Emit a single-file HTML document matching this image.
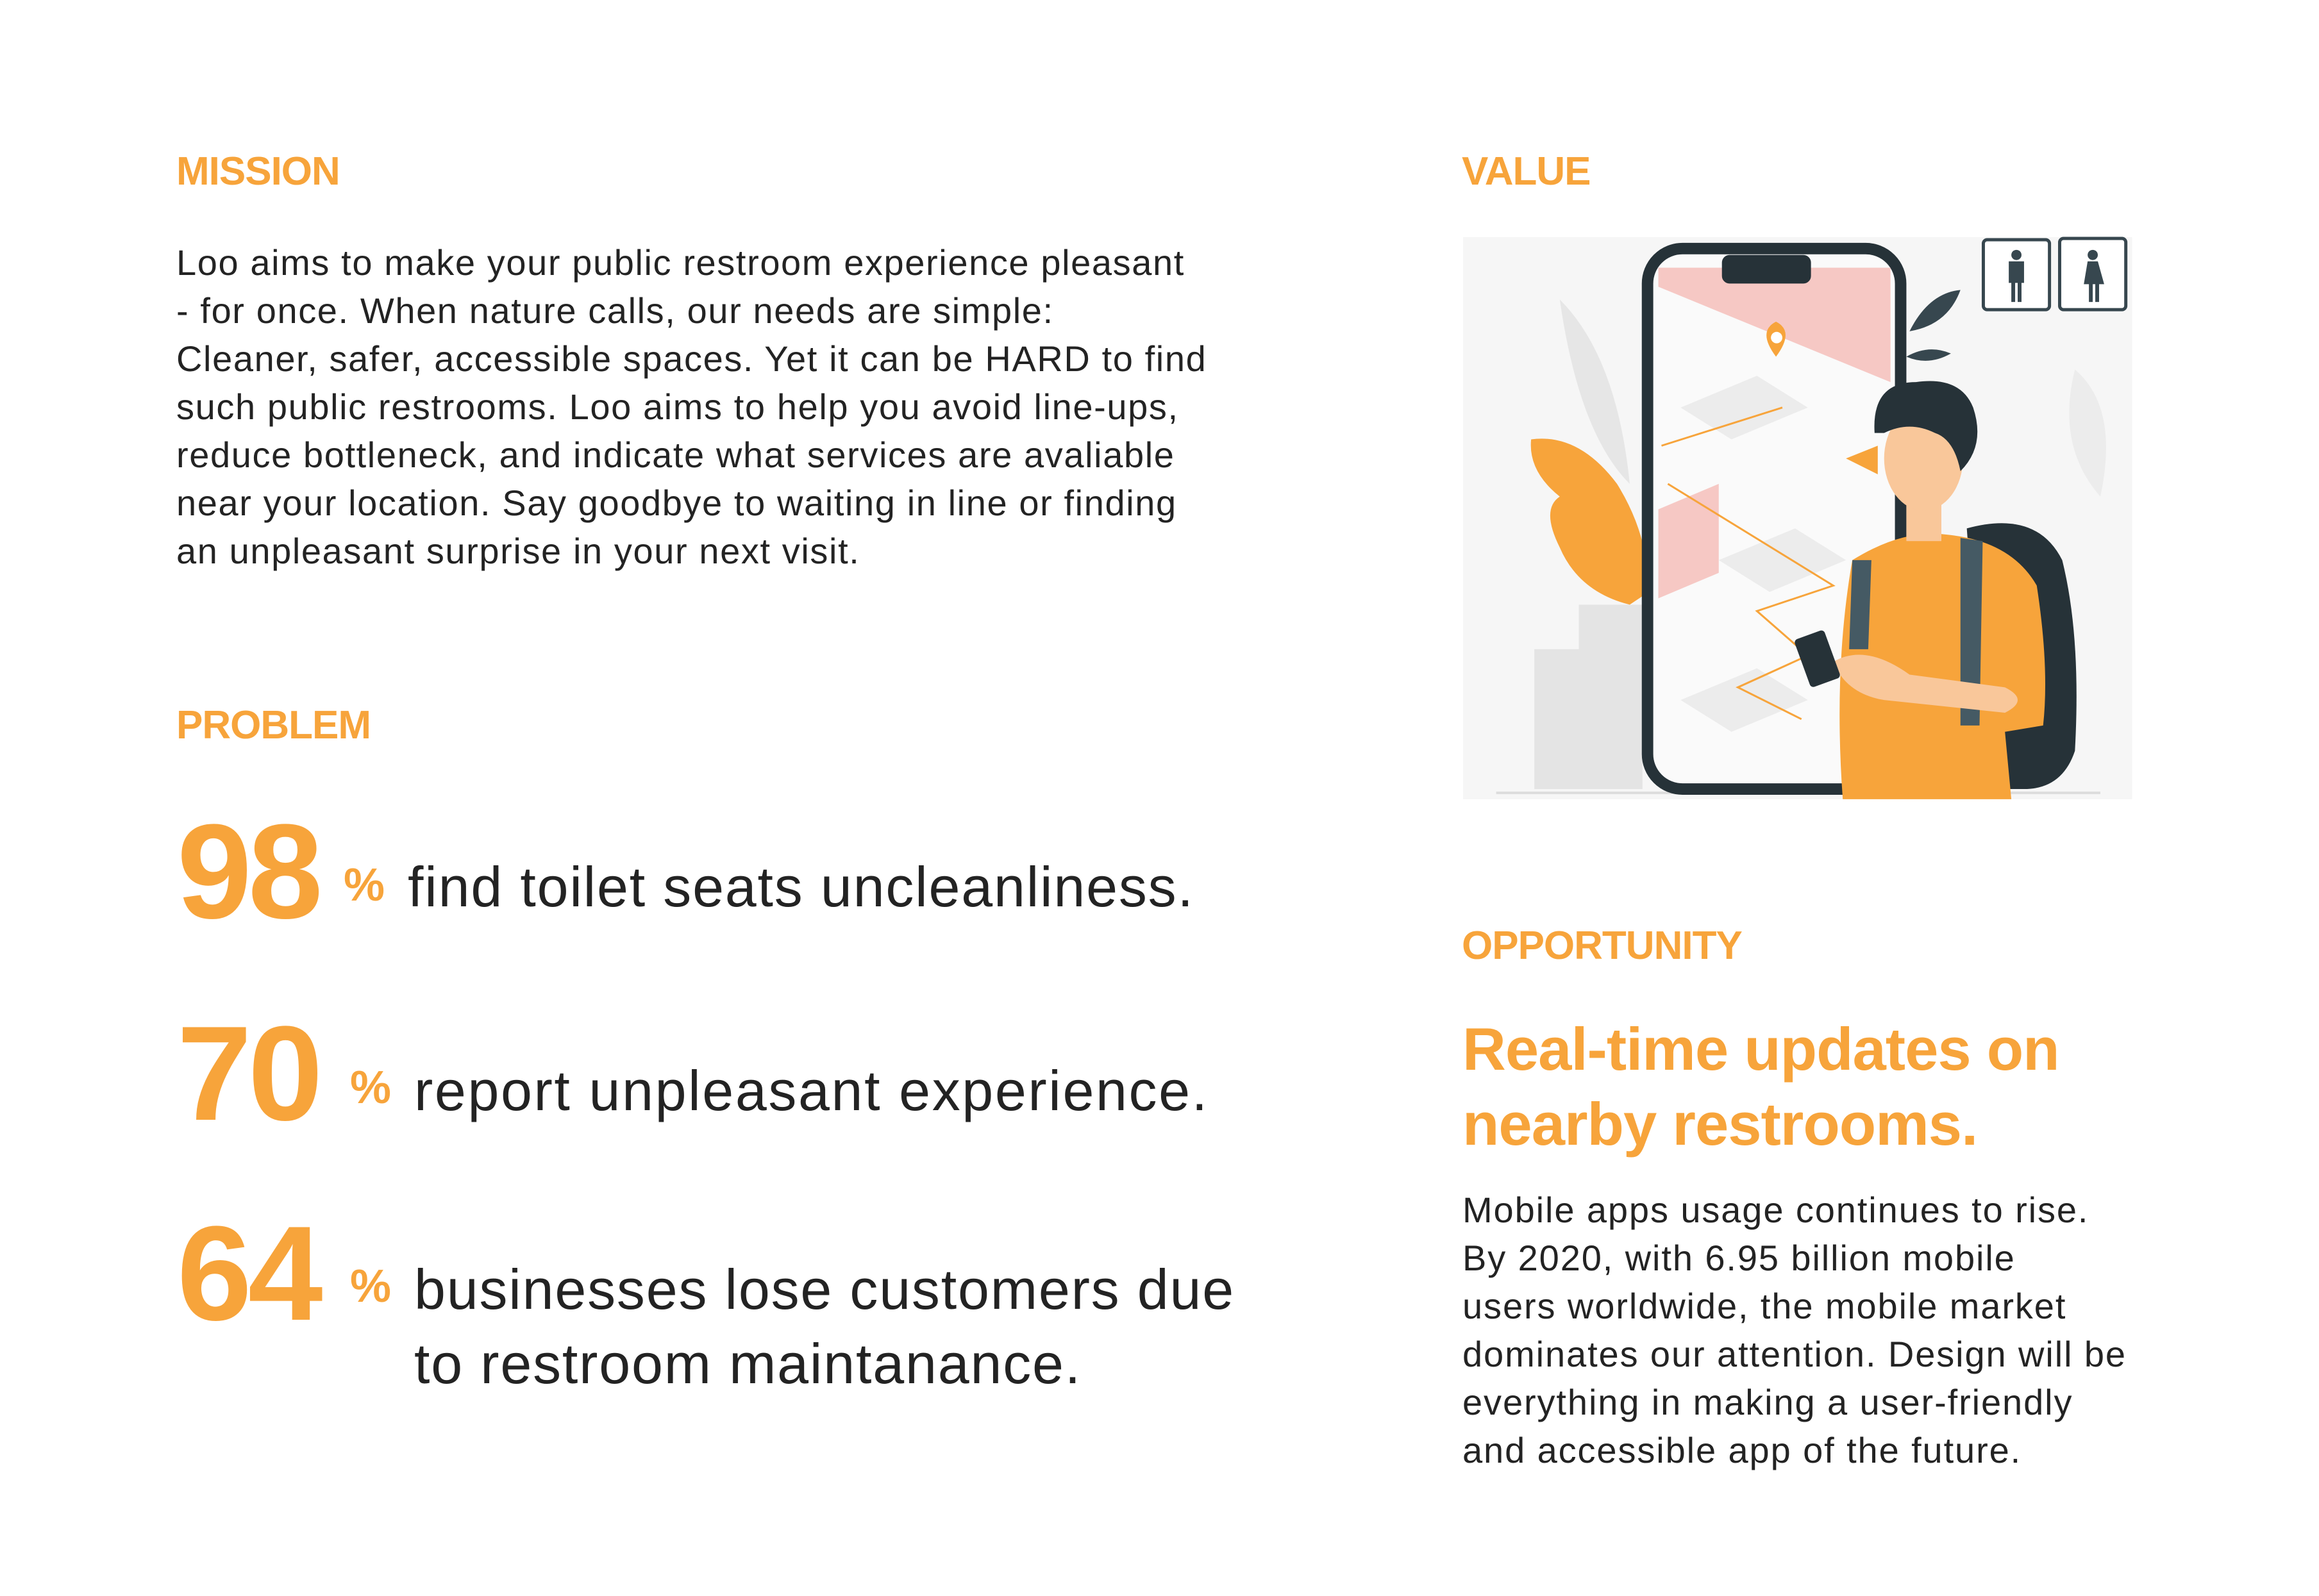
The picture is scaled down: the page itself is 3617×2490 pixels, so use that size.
<!DOCTYPE html>
<html><head><meta charset="utf-8"><style>
html,body{margin:0;padding:0;background:#fff;}
body{width:3617px;height:2490px;position:relative;overflow:hidden;font-family:"Liberation Sans",sans-serif;color:#232323;}
.h{position:absolute;color:#F7A43B;font-weight:bold;font-size:62px;letter-spacing:-1px;white-space:nowrap;}
.p{position:absolute;font-size:56px;line-height:75px;white-space:nowrap;letter-spacing:1.6px;}
.num{position:absolute;color:#F7A43B;font-weight:bold;font-size:210px;line-height:1;letter-spacing:-6px;}
.pc{position:absolute;color:#F7A43B;font-weight:bold;font-size:72px;}
.st{position:absolute;font-size:88px;line-height:116px;white-space:nowrap;letter-spacing:1.8px;}
</style></head><body>
<div class="h" style="left:275px;top:232px;">MISSION</div>
<div class="p" style="left:275px;top:372px;">Loo aims to make your public restroom experience pleasant<br>- for once. When nature calls, our needs are simple:<br>Cleaner, safer, accessible spaces. Yet it can be HARD to find<br>such public restrooms. Loo aims to help you avoid line-ups,<br>reduce bottleneck, and indicate what services are avaliable<br>near your location. Say goodbye to waiting in line or finding<br>an unpleasant surprise in your next visit.</div>

<div class="h" style="left:275px;top:1096px;">PROBLEM</div>

<div class="num" style="left:276px;top:1255px;">98</div>
<div class="pc" style="left:536px;top:1340px;">%</div>
<div class="st" style="left:636px;top:1326px;">find toilet seats uncleanliness.</div>

<div class="num" style="left:276px;top:1570px;">70</div>
<div class="pc" style="left:546px;top:1656px;">%</div>
<div class="st" style="left:646px;top:1644px;letter-spacing:2.6px;">report unpleasant experience.</div>

<div class="num" style="left:276px;top:1882px;">64</div>
<div class="pc" style="left:546px;top:1966px;">%</div>
<div class="st" style="left:646px;top:1954px;">businesses lose customers due<br>to restroom maintanance.</div>

<div class="h" style="left:2280px;top:232px;">VALUE</div>

<svg style="position:absolute;left:0;top:0" width="3617" height="2490" viewBox="0 0 3617 2490">
<g transform="translate(2282,370) scale(0.992) translate(-2298,-372)">
 <rect x="2298" y="372" width="1052" height="884" fill="#f6f6f6"/>
 <path d="M2450 470 Q2540 560 2560 760 Q2480 680 2450 470Z" fill="#e6e6e6"/>
 <rect x="2410" y="1020" width="170" height="220" fill="#e4e4e4"/>
 <rect x="2480" y="950" width="100" height="90" fill="#e4e4e4"/>
 <path d="M3260 580 Q3330 640 3300 780 Q3230 700 3260 580Z" fill="#ececec"/>
 <line x1="2350" y1="1246" x2="3300" y2="1246" stroke="#ddd" stroke-width="4"/>
 <path d="M2405 690 Q2480 680 2540 760 Q2590 840 2590 930 L2560 950 Q2480 930 2450 860 Q2420 800 2450 780 Q2400 740 2405 690Z" fill="#F7A43B"/>
 <rect x="2588" y="390" width="398" height="850" rx="55" fill="#fafafa" stroke="#263238" stroke-width="18"/>
 <path d="M2605 420 L2970 420 L2970 600 L2605 450Z" fill="#f6c8c4"/>
 <path d="M2605 800 L2700 760 L2700 900 L2605 940Z" fill="#f6c8c4"/>
 <g fill="#ececec"><path d="M2640 640 L2760 590 L2840 640 L2720 690Z"/><path d="M2700 880 L2820 830 L2900 880 L2780 930Z"/><path d="M2640 1100 L2760 1050 L2840 1100 L2720 1150Z"/></g>
 <rect x="2705" y="400" width="140" height="45" rx="12" fill="#263238"/>
 <path d="M2610 700 L2800 640 M2620 760 L2880 920 L2760 960 L2840 1030 L2730 1080 L2830 1130" stroke="#F7A43B" stroke-width="3" fill="none"/>
 <path d="M2790 560 Q2760 520 2790 505 Q2820 520 2790 560Z" fill="#F7A43B"/>
 <circle cx="2791" cy="530" r="9" fill="#fff"/>
 <path d="M3000 520 Q3030 460 3080 455 Q3060 510 3000 520Z" fill="#37474f"/>
 <path d="M2995 560 Q3030 540 3065 555 Q3030 575 2995 560Z" fill="#37474f"/>
 <path d="M3090 830 Q3200 800 3240 880 Q3270 1000 3260 1180 Q3240 1240 3180 1240 L3120 1240Z" fill="#263238"/>
 <path d="M2910 880 Q2990 830 3060 840 Q3160 850 3200 920 Q3220 1050 3210 1140 L3150 1150 L3160 1256 L2895 1256 Q2880 1050 2910 880Z" fill="#F7A43B"/>
 <path d="M2910 880 L2940 880 L2935 1020 L2905 1020Z" fill="#455a64"/>
 <path d="M3080 845 L3115 850 L3110 1140 L3080 1140Z" fill="#455a64"/>
 <path d="M2880 1040 Q2930 1010 3000 1060 L3150 1080 Q3190 1100 3150 1120 L2960 1100 Q2900 1090 2880 1040Z" fill="#f9c79a"/>
 <rect x="2830" y="995" width="50" height="80" rx="6" fill="#263238" transform="rotate(-20 2855 1035)"/>
 <rect x="2995" y="780" width="55" height="70" fill="#f9c79a"/>
 <ellipse cx="3022" cy="720" rx="62" ry="82" fill="#f9c79a"/>
 <path d="M2945 680 Q2940 600 3010 600 Q3080 590 3100 640 Q3120 700 3080 740 Q3070 690 3040 680 Q3000 660 2960 680Z" fill="#263238"/>
 <path d="M2900 720 L2950 700 L2950 745Z" fill="#F7A43B"/>
 <rect x="3116" y="376" width="104" height="110" rx="6" fill="#fff" stroke="#37474f" stroke-width="5"/>
 <rect x="3236" y="374" width="104" height="112" rx="6" fill="#fff" stroke="#37474f" stroke-width="5"/>
 <circle cx="3168" cy="400" r="8" fill="#37474f"/>
 <path d="M3156 410 h24 v34 h-4 v30 h-6 v-30 h-4 v30 h-6 v-30 h-4Z" fill="#37474f"/>
 <circle cx="3288" cy="400" r="8" fill="#37474f"/>
 <path d="M3280 410 h16 l10 36 h-8 v28 h-6 v-28 h-4 v28 h-6 v-28 h-8Z" fill="#37474f"/>
</g>
</svg>

<div class="h" style="left:2280px;top:1440px;">OPPORTUNITY</div>
<div style="position:absolute;left:2281px;top:1578px;color:#F7A43B;font-weight:bold;font-size:94px;line-height:117px;letter-spacing:-1px;white-space:nowrap;">Real-time updates on<br>nearby restrooms.</div>
<div class="p" style="left:2281px;top:1850px;letter-spacing:1.9px;">Mobile apps usage continues to rise.<br>By 2020, with 6.95 billion mobile<br>users worldwide, the mobile market<br>dominates our attention. Design will be<br>everything in making a user-friendly<br>and accessible app of the future.</div>
</body></html>
